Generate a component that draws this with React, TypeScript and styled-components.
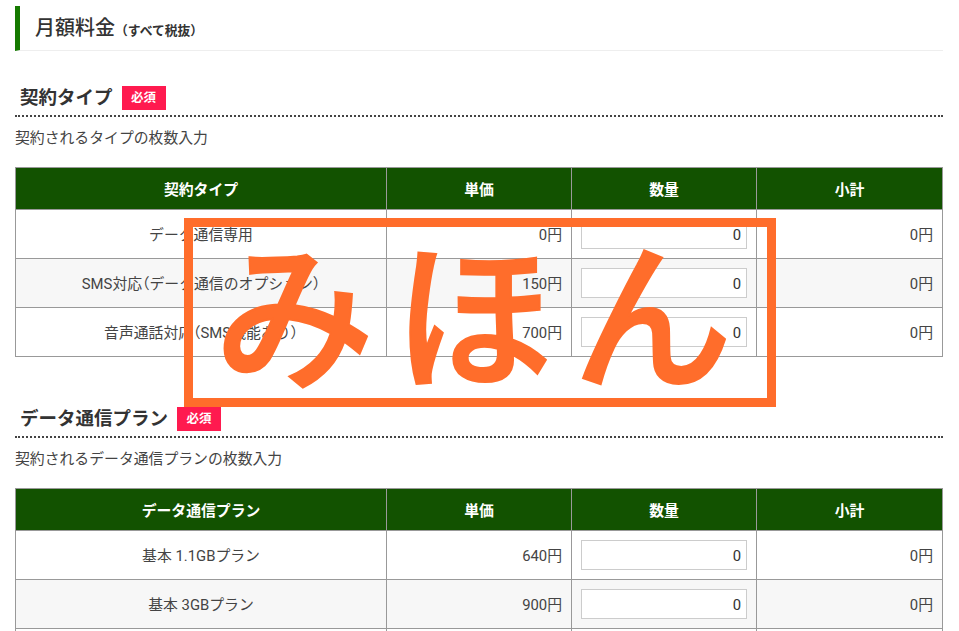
import styled, { createGlobalStyle } from 'styled-components'

const GlobalS = createGlobalStyle`
    html, body {
        margin: 0;
        padding: 0;
        height: 631px;
        overflow: hidden;
        background: #fff;
        font-family: Roboto, "Noto Sans CJK JP", sans-serif;
        color: #444;
    }
`

const PageS = styled.main`
    position: relative;
    padding: 6px 16px 0 15px;
`

const TitleS = styled.h2`
    display: flex;
    align-items: baseline;
    height: 44px;
    margin: 0 0 33px;
    padding-left: 15px;
    border-left: 5px solid #157a00;
    border-bottom: 1px solid #eee;
    font-size: 20px;
    font-weight: 500;
    line-height: 44px;
    color: #333;
`

const TitleNoteS = styled.span`
    font-size: 12.8px;
    font-weight: 700;
`

const SectionHeadS = styled.div`
    display: flex;
    align-items: center;
    gap: 9px;
    height: 24px;
    padding: 0 0 7px 5px;
    border-bottom: 2px dotted #444;
    font-size: 18.5px;
    font-weight: 700;
    color: #333;
`

const BadgeS = styled.span`
    display: block;
    width: 44px;
    height: 24px;
    margin-top: 4px;
    background: #ff1a4f;
    color: #fff;
    font-size: 12.5px;
    font-weight: 700;
    line-height: 24px;
    text-align: center;
`

const DescS = styled.p`
    margin: 11px 0 18px;
    font-size: 14.85px;
    line-height: 21px;
    color: #444;
`

const TableS = styled.table`
    width: 927px;
    margin-bottom: 48px;
    border-collapse: collapse;
    table-layout: fixed;
    font-size: 14.85px;
    font-feature-settings: "halt";
`

const HeadCellS = styled.th`
    height: 41px;
    padding: 0;
    border: 1px solid #999;
    background: #125200;
    color: #fff;
    font-size: 14.85px;
    font-weight: 700;
    text-align: center;
`

const RowS = styled.tr<{ $alt: boolean }>`
    background: ${ ({ $alt }) => $alt ? '#f7f7f7' : '#fff' };
`

const CellS = styled.td<{ $align: 'center' | 'right' }>`
    height: 47px;
    padding: 1px 9px 0;
    border: 1px solid #999;
    line-height: 20px;
    text-align: ${ ({ $align }) => $align };
`

const QtyCellS = styled.td`
    height: 48px;
    padding: 0 9px;
    border: 1px solid #999;
`

const QtyInputS = styled.input`
    display: block;
    box-sizing: border-box;
    width: 166px;
    height: 30px;
    padding: 1px 5px 0;
    border: 1px solid #ccc;
    background: #fff;
    color: #333;
    font-family: Roboto, sans-serif;
    font-size: 14.85px;
    text-align: right;
`

const StampS = styled.div`
    position: absolute;
    left: 184px;
    top: 218px;
    box-sizing: border-box;
    width: 592px;
    height: 189px;
    border: 9px solid #ff6d2b;
    color: #ff6d2b;
    font-family: "Noto Sans CJK JP", sans-serif;
    font-size: 160px;
    font-weight: 500;
    -webkit-text-stroke: 2px #ff6d2b;
    line-height: 160px;
    letter-spacing: 19px;
    text-indent: 6px;
    text-align: center;
    white-space: nowrap;
    overflow: hidden;
`

interface RowI {
    name: string
    price: string
}

const typeRows: RowI[] = [
    { name: 'データ通信専用', price: '0円' },
    { name: 'SMS対応（データ通信のオプション）', price: '150円' },
    { name: '音声通話対応（SMS機能あり）', price: '700円' }
]

const planRows: RowI[] = [
    { name: '基本 1.1GBプラン', price: '640円' },
    { name: '基本 3GBプラン', price: '900円' },
    { name: '基本 6GBプラン', price: '1,450円' }
]

const PriceTable = ({ label, rows }: { label: string, rows: RowI[] }) => (
    <TableS>
        <colgroup>
            <col style={{ width: 371 }} />
            <col style={{ width: 185 }} />
            <col style={{ width: 185 }} />
            <col style={{ width: 186 }} />
        </colgroup>
        <thead>
            <tr>
                <HeadCellS>{label}</HeadCellS>
                <HeadCellS>単価</HeadCellS>
                <HeadCellS>数量</HeadCellS>
                <HeadCellS>小計</HeadCellS>
            </tr>
        </thead>
        <tbody>
            {rows.map((row, i) =>
                <RowS $alt={ i % 2 === 1 } key={ row.name }>
                    <CellS $align="center">{row.name}</CellS>
                    <CellS $align="right">{row.price}</CellS>
                    <QtyCellS><QtyInputS type="text" defaultValue="0" /></QtyCellS>
                    <CellS $align="right">0円</CellS>
                </RowS>
            )}
        </tbody>
    </TableS>
)

const App = () => (
    <>
        <GlobalS />
        <PageS>
            <TitleS>月額料金<TitleNoteS>（すべて税抜）</TitleNoteS></TitleS>
            <SectionHeadS>契約タイプ<BadgeS>必須</BadgeS></SectionHeadS>
            <DescS>契約されるタイプの枚数入力</DescS>
            <PriceTable label="契約タイプ" rows={ typeRows } />
            <SectionHeadS>データ通信プラン<BadgeS>必須</BadgeS></SectionHeadS>
            <DescS>契約されるデータ通信プランの枚数入力</DescS>
            <PriceTable label="データ通信プラン" rows={ planRows } />
            <StampS>みほん</StampS>
        </PageS>
    </>
)

export default App
